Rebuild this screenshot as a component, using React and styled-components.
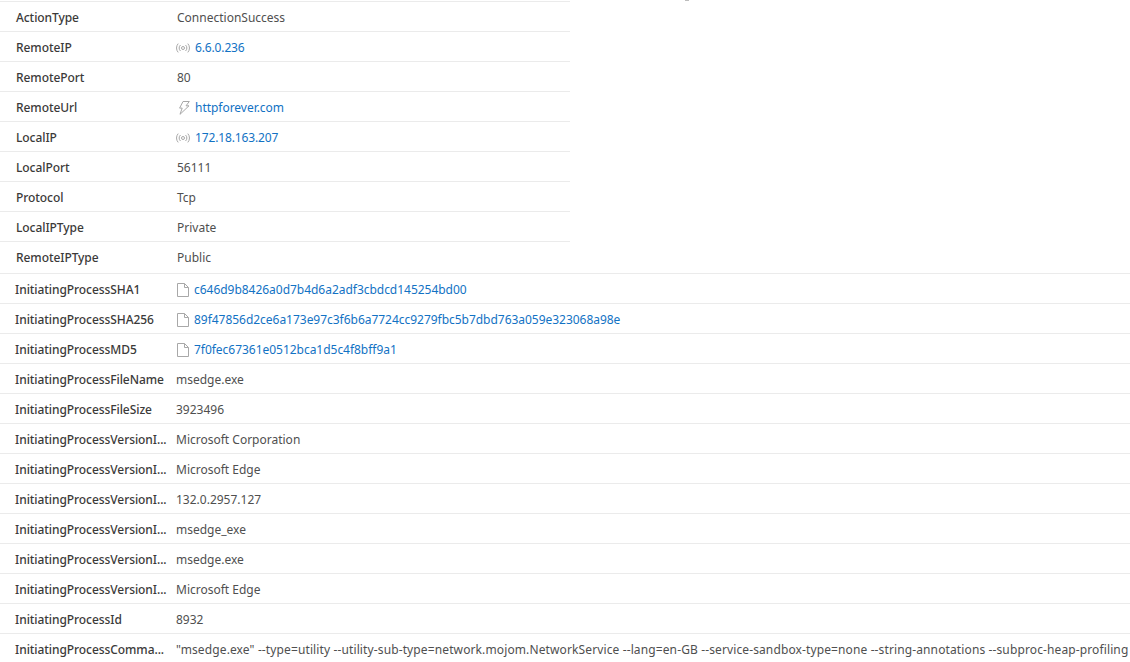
import React from "react";
import styled, { createGlobalStyle } from "styled-components";

const Global = createGlobalStyle`
  html, body { margin: 0; padding: 0; background: #fff; overflow: hidden; }
  body { font-family: "Noto Sans", "Open Sans", sans-serif; font-size: 12px; color: #424242; }
`;
const Page = styled.div`
  position: relative;
  width: 1130px;
  height: 662px;
  overflow: hidden;
  padding-top: 1px;
  box-sizing: border-box;
`;
const TopMark = styled.span`
  position: absolute;
  left: 685px;
  top: 0;
  width: 4px;
  height: 1px;
  background: #bdbdbd;
`;
const Section = styled.section`
  width: ${(p) => p.$width};
  margin-bottom: ${(p) => p.$gap || 0}px;
`;
const Row = styled.div`
  display: flex;
  align-items: center;
  height: 30px;
  box-sizing: border-box;
  border-top: 1px solid #ebebeb;
  padding-top: 2px;
  white-space: nowrap;
  padding-left: ${(p) => p.$inset}px;
`;
const Label = styled.div`
  flex: 0 0 ${(p) => p.$width}px;
  color: #3b3a39;
  font-weight: 500;
  letter-spacing: -0.07px;
`;
const Value = styled.div`
  display: flex;
  align-items: center;
  gap: 5px;
  color: #4f4f4f;
  letter-spacing: ${(p) => p.$spread || 0}px;
`;
const Link = styled.a`
  color: #1272c4;
  letter-spacing: ${(p) => p.$spread || 0}px;
`;
const IconSlot = styled.svg`
  flex: none;
  width: 14px;
  height: 14px;
  margin-left: -1px;
  fill: none;
  stroke: #a8a8a8;
  stroke-width: 1;
`;

const Signal = () => (
  <IconSlot viewBox="0 0 14 14">
    <circle cx="7" cy="7" r="1.5" />
    <path d="M4.5 4a4 4 0 0 0 0 6M9.5 4a4 4 0 0 1 0 6M2.2 2.6a6.6 6.6 0 0 0 0 8.8M11.8 2.6a6.6 6.6 0 0 1 0 8.8" />
  </IconSlot>
);
const Bolt = () => (
  <IconSlot viewBox="0 0 14 14">
    <path d="M7 .5h6.3L10 4.8h3L4 13.3l2.2-6.2H3.6z" />
  </IconSlot>
);
const FileIcon = () => (
  <IconSlot viewBox="0 0 14 14">
    <path d="M2.5.5h7l4 4v9h-11zM9.5.5v4h4" />
  </IconSlot>
);
const icons = { ip: Signal, url: Bolt, file: FileIcon };

const first = [
  ["ActionType", "ConnectionSuccess"],
  ["RemoteIP", "6.6.0.236", "ip"],
  ["RemotePort", "80"],
  ["RemoteUrl", "httpforever.com", "url"],
  ["LocalIP", "172.18.163.207", "ip"],
  ["LocalPort", "56111"],
  ["Protocol", "Tcp"],
  ["LocalIPType", "Private"],
  ["RemoteIPType", "Public"],
];
const second = [
  ["InitiatingProcessSHA1", "c646d9b8426a0d7b4d6a2adf3cbdcd145254bd00", "file"],
  ["InitiatingProcessSHA256", "89f47856d2ce6a173e97c3f6b6a7724cc9279fbc5b7dbd763a059e323068a98e", "file"],
  ["InitiatingProcessMD5", "7f0fec67361e0512bca1d5c4f8bff9a1", "file"],
  ["InitiatingProcessFileName", "msedge.exe"],
  ["InitiatingProcessFileSize", "3923496"],
  ["InitiatingProcessVersionI...", "Microsoft Corporation"],
  ["InitiatingProcessVersionI...", "Microsoft Edge"],
  ["InitiatingProcessVersionI...", "132.0.2957.127"],
  ["InitiatingProcessVersionI...", "msedge_exe"],
  ["InitiatingProcessVersionI...", "msedge.exe"],
  ["InitiatingProcessVersionI...", "Microsoft Edge"],
  ["InitiatingProcessId", "8932"],
  ["InitiatingProcessComma...", "\"msedge.exe\" --type=utility --utility-sub-type=network.mojom.NetworkService --lang=en-GB --service-sandbox-type=none --string-annotations --subproc-heap-profiling", null, 0.12],
];

const Rows = ({ data, inset, label }) =>
  data.map(([k, v, icon, spread], i) => {
    const Icon = icons[icon];
    return (
      <Row key={i} $inset={inset}>
        <Label $width={label}>{k}</Label>
        <Value $spread={spread}>
          {Icon && <Icon />}
          {Icon ? <Link $spread={icon === "ip" ? -0.14 : -0.03}>{v}</Link> : v}
        </Value>
      </Row>
    );
  });

export default function App() {
  return (
    <Page>
      <Global />
      <TopMark />
      <Section $width="570px" $gap={2}>
        <Rows data={first} inset={16} label={161} />
      </Section>
      <Section $width="100%">
        <Rows data={second} inset={15} label={161} />
      </Section>
    </Page>
  );
}
